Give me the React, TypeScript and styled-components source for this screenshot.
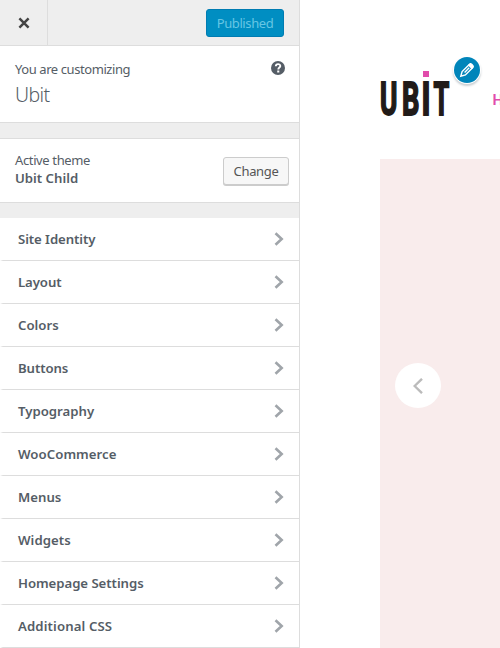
import React from "react";
import styled, { createGlobalStyle } from "styled-components";

const GlobalStyle = createGlobalStyle`
  * { box-sizing: border-box; }
  body {
    margin: 0;
    background: #fff;
    overflow: hidden;
    font-family: "Noto Sans", "Open Sans", sans-serif;
    font-size: 13px;
    color: #555d66;
  }
  svg { display: block; }
  button { font: inherit; cursor: pointer; }
`;

const Page = styled.div`
  display: flex;
  width: 500px;
  height: 648px;
  overflow: hidden;
`;

const Sidebar = styled.aside`
  flex: none;
  width: 300px;
  height: 648px;
  background: #eee;
  border-right: 1px solid #ddd;
`;

const Toolbar = styled.header`
  display: flex;
  justify-content: space-between;
  height: 46px;
  padding-right: 15px;
  border-bottom: 1px solid #ddd;
`;

const CloseButton = styled.button`
  display: flex;
  align-items: center;
  width: 48px;
  padding: 1px 0 0 18px;
  border: 0;
  border-right: 1px solid #ddd;
  background: #eee;
`;

const PublishButton = styled.button`
  width: 78px;
  height: 28px;
  margin-top: 9px;
  padding: 0;
  border: 1px solid #007cb2;
  border-radius: 3px;
  background: #008ec2;
  color: #66c6e4;
  line-height: 26px;
  letter-spacing: -0.4px;
`;

const Panel = styled.section<{ $height: number; $top: number; $right: number }>`
  display: flex;
  justify-content: space-between;
  height: ${(p) => p.$height}px;
  padding: ${(p) => p.$top}px ${(p) => p.$right}px 0 15px;
  background: #fff;
  border-bottom: 1px solid #ddd;
`;

const ThemePanel = styled(Panel)`
  margin: 15px 0;
  border-top: 1px solid #ddd;
`;

const Caption = styled.div<{ $spacing: number }>`
  line-height: 18px;
  letter-spacing: ${(p) => p.$spacing}px;
`;

const SiteTitle = styled.h1`
  margin: 3px 0 0;
  font-size: 19.5px;
  font-weight: 300;
  line-height: 28px;
  letter-spacing: -0.6px;
`;

const ThemeName = styled.div`
  font-weight: 570;
  font-size: 13.2px;
  line-height: 18px;
`;

const HelpIcon = styled.svg`
  margin-top: 1px;
`;

const ChangeButton = styled.button`
  width: 66px;
  height: 28px;
  margin-top: 6px;
  padding: 0;
  border: 1px solid #ccc;
  border-radius: 3px;
  background: #f7f7f7;
  box-shadow: 0 1px 0 #ccc;
  color: #555;
  line-height: 26px;
  letter-spacing: -0.35px;
`;

const SectionList = styled.ul`
  margin: 0;
  padding: 0;
  list-style: none;
`;

const SectionRow = styled.li<{ $spacing: number }>`
  display: flex;
  align-items: center;
  justify-content: space-between;
  height: 43px;
  padding: 0 15px;
  background: #fff;
  border-bottom: 1px solid #ddd;
  border-left: 3px solid #fff;
  font-size: 13.2px;
  font-weight: 570;
  letter-spacing: ${(p) => p.$spacing}px;
`;

const Preview = styled.main`
  flex: 1;
  min-width: 0;
  padding-left: 80px;
`;

const SiteHeader = styled.div`
  display: flex;
  height: 159px;
  overflow: hidden;
`;

const Logo = styled.svg`
  flex: none;
  margin-top: 68px;
  overflow: visible;
`;

const EditShortcut = styled.button`
  flex: none;
  display: grid;
  place-items: center;
  width: 26px;
  height: 26px;
  margin: 57px 0 0 2px;
  padding: 0;
  border: 0;
  border-radius: 50%;
  background: #0085ba;
  box-shadow: 0 0 0 1px #fff, 0 2px 2px 1px rgba(46, 68, 83, 0.25);
`;

const NavLink = styled.a`
  flex: none;
  margin: 89px 0 0 12.5px;
  color: #e14cab;
  font: 600 15px/22px Roboto, sans-serif;
`;

const Hero = styled.div`
  height: 489px;
  padding: 204px 0 0 15px;
  background: #f9ecec;
`;

const PreviousButton = styled.button`
  display: grid;
  place-items: center;
  width: 46px;
  height: 45px;
  padding: 0;
  border: 0;
  border-radius: 50%;
  background: #fff;
`;

const sections = [
  { label: "Site Identity", spacing: -0.08 },
  { label: "Layout", spacing: -0.1 },
  { label: "Colors", spacing: 0 },
  { label: "Buttons", spacing: -0.1 },
  { label: "Typography", spacing: 0 },
  { label: "WooCommerce", spacing: 0.05 },
  { label: "Menus", spacing: 0 },
  { label: "Widgets", spacing: 0.05 },
  { label: "Homepage Settings", spacing: -0.05 },
  { label: "Additional CSS", spacing: 0.12 },
];

const logoLetters = [
  { letter: "U", x: 0, width: 17.4 },
  { letter: "B", x: 22, width: 17.4 },
  { letter: "I", x: 41.5, width: 9 },
  { letter: "T", x: 53.6, width: 15.8 },
];

const Chevron = () => (
  <svg width="10" height="14" viewBox="0 0 10 14" fill="none" stroke="#a0a5aa" strokeWidth="2.6">
    <path d="M1.5 1.2 7.7 7l-6.2 5.8" />
  </svg>
);

export default function App() {
  return (
    <>
      <GlobalStyle />
      <Page>
        <Sidebar>
          <Toolbar>
            <CloseButton aria-label="Close">
              <svg width="12" height="12" viewBox="0 0 12 12" stroke="#444" strokeWidth="2.5">
                <path d="m1.4 1.4 9.2 9.2m0-9.2-9.2 9.2" />
              </svg>
            </CloseButton>
            <PublishButton>Published</PublishButton>
          </Toolbar>
          <Panel $height={77} $top={14} $right={14}>
            <div>
              <Caption $spacing={-0.42}>You are customizing</Caption>
              <SiteTitle>Ubit</SiteTitle>
            </div>
            <HelpIcon width="14" height="14" viewBox="0 0 14 14">
              <circle cx="7" cy="7" r="7" fill="#555d66" />
              <path
                d="M4.8 5.2c.1-2.8 4.6-2.7 4.5-.1 0 1.5-2 1.4-2 3.3"
                fill="none"
                stroke="#fff"
                strokeWidth="1.9"
              />
              <path d="M6.2 9.5h2.1v2H6.2z" fill="#fff" />
            </HelpIcon>
          </Panel>
          <ThemePanel $height={65} $top={12} $right={10}>
            <div>
              <Caption $spacing={-0.37}>Active theme</Caption>
              <ThemeName>Ubit Child</ThemeName>
            </div>
            <ChangeButton>Change</ChangeButton>
          </ThemePanel>
          <SectionList>
            {sections.map(({ label, spacing }) => (
              <SectionRow key={label} $spacing={spacing}>
                {label}
                <Chevron />
              </SectionRow>
            ))}
          </SectionList>
        </Sidebar>
        <Preview>
          <SiteHeader>
            <Logo width="72" height="50" viewBox="0 0 72 50" aria-label="UBIT">
              <g
                fill="#211b18"
                stroke="#211b18"
                strokeWidth="2"
                fontFamily="Roboto, sans-serif"
                fontSize="46"
                fontWeight="700"
              >
                {logoLetters.map(({ letter, x, width }) => (
                  <text
                    key={letter}
                    x={x}
                    y="46.8"
                    textLength={width}
                    lengthAdjust="spacingAndGlyphs"
                  >
                    {letter}
                  </text>
                ))}
              </g>
              <path d="M43 3h6v6h-6z" fill="#e14cab" />
            </Logo>
            <EditShortcut aria-label="Edit logo">
              <svg width="16" height="16" viewBox="0 0 16 16" fill="none" stroke="#fff" strokeWidth="1.4">
                <path d="m1.8 14.2 1.3-4.6 7.2-7.2 3.3 3.3-7.2 7.2zM5.6 10.4l4.6-4.6" />
                <path d="m8.8 3.2 4 4 2.2-2.2c0-1.8-2.2-4-4-4z" fill="#fff" stroke="none" />
              </svg>
            </EditShortcut>
            <NavLink>Home</NavLink>
          </SiteHeader>
          <Hero>
            <PreviousButton aria-label="Previous slide">
              <svg width="10" height="16" viewBox="0 0 10 16" fill="none" stroke="#bbb" strokeWidth="2.4">
                <path d="M9 .8 1.6 8 9 15.2" />
              </svg>
            </PreviousButton>
          </Hero>
        </Preview>
      </Page>
    </>
  );
}
